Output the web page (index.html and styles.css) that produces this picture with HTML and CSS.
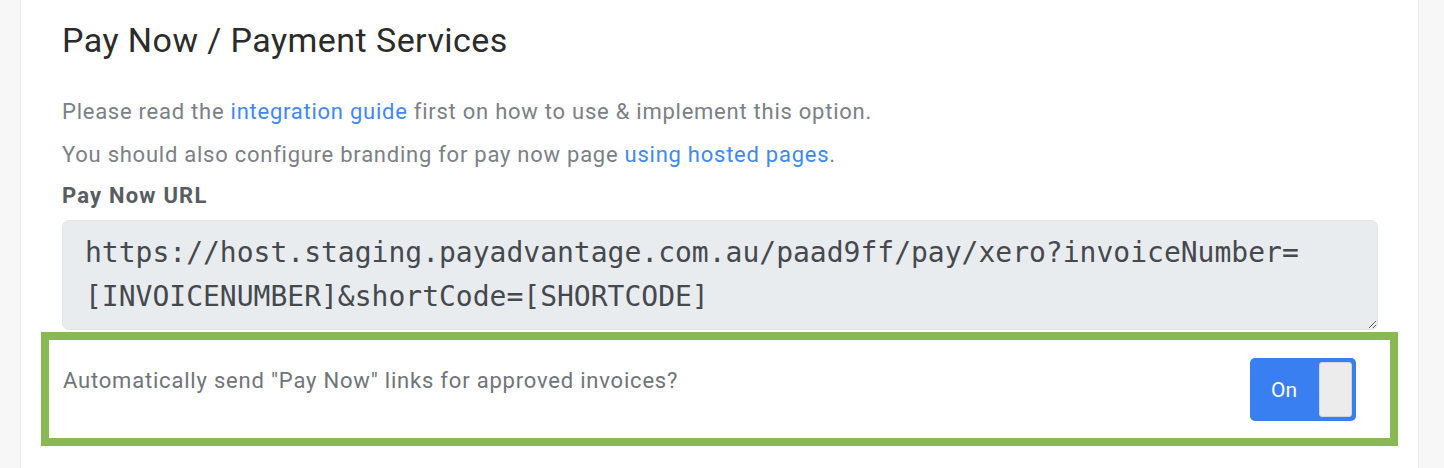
FILE: index.html
```html
<!DOCTYPE html>
<html lang="en">
<head>
  <meta charset="UTF-8" />
  <meta name="viewport" content="width=device-width, initial-scale=1" />
  <title>Pay Now / Payment Services</title>
  <link rel="stylesheet" href="styles.css">
</head>
<body>
  <div class="card">
    <h2>Pay Now / Payment Services</h2>
    <p class="help first">Please read the <a href="#">integration guide</a> first on how to use &amp; implement this option.</p>
    <p class="help">You should also configure branding for pay now page <a href="#">using hosted pages</a>.</p>
    <label class="field-label" for="payNowUrl">Pay Now URL</label>
    <textarea id="payNowUrl" class="url-box" readonly>https://host.staging.payadvantage.com.au/paad9ff/pay/xero?invoiceNumber=
[INVOICENUMBER]&amp;shortCode=[SHORTCODE]</textarea>

    <div class="highlight-row">
      <span class="row-text">Automatically send "Pay Now" links for approved invoices?</span>
      <button class="toggle" type="button">
        <span class="toggle-label">On</span>
        <span class="toggle-knob"></span>
      </button>
    </div>
  </div>
</body>
</html>
```

FILE: styles.css
```css
* { box-sizing: border-box; }
body {
  margin: 0;
  background: #f7f7f7;
  font-family: Roboto, 'Noto Sans', sans-serif;
  color: #212529;
  padding: 0 25px 0 20px;
}
.card {
  background: #fff;
  border-left: 1px solid #ebebeb;
  border-right: 1px solid #ebebeb;
  padding: 20px 40px 22px 41px;
  min-height: 468px;
}
h2 {
  margin: 0 0 36px;
  font-size: 34px;
  font-weight: 400;
  line-height: 41px;
  letter-spacing: 0.45px;
  color: #2b2b2b;
}
.help {
  margin: 0 0 13px;
  font-size: 22px;
  line-height: 30px;
  letter-spacing: 0.75px;
  color: #7b8087;
}
.help a {
  color: #3f88f5;
  text-decoration: none;
}
.help + .help { margin-bottom: 11px; }
.field-label {
  display: block;
  font-size: 22px;
  line-height: 30px;
  font-weight: 700;
  letter-spacing: 1.2px;
  color: #585d63;
  margin-bottom: 9px;
}
.url-box {
  display: block;
  width: 100%;
  height: 110px;
  padding: 10px 22px;
  background: #e9ecef;
  border: 1px solid #e2e5e8;
  border-radius: 7px;
  font-family: 'DejaVu Sans Mono', 'Liberation Mono', monospace;
  font-size: 28px;
  line-height: 44px;
  color: #45494e;
  white-space: pre;
  overflow: hidden;
  resize: vertical;
  margin: 0 0 2px;
}
.url-box:focus { outline: none; }
.highlight-row {
  margin: 0 -20px 0 -21px;
  border: 8px solid #89b955;
  display: flex;
  justify-content: space-between;
  align-items: flex-start;
  padding: 18px 34px 17px 14px;
}
.row-text {
  margin-top: 8px;
  font-size: 22px;
  line-height: 30px;
  letter-spacing: 0.8px;
  color: #6f747a;
}
.toggle {
  display: flex;
  align-items: center;
  justify-content: space-between;
  width: 106px;
  height: 63px;
  padding: 4px 4px 4px 21px;
  background: #3a7ff2;
  border: none;
  border-radius: 5px;
  cursor: pointer;
}
.toggle-label {
  color: #fff;
  font-family: Roboto, sans-serif;
  font-size: 21px;
}
.toggle-knob {
  width: 33px;
  height: 55px;
  background: #ececec;
  border: 1px solid #d6d6d6;
  border-radius: 3px;
}
```
